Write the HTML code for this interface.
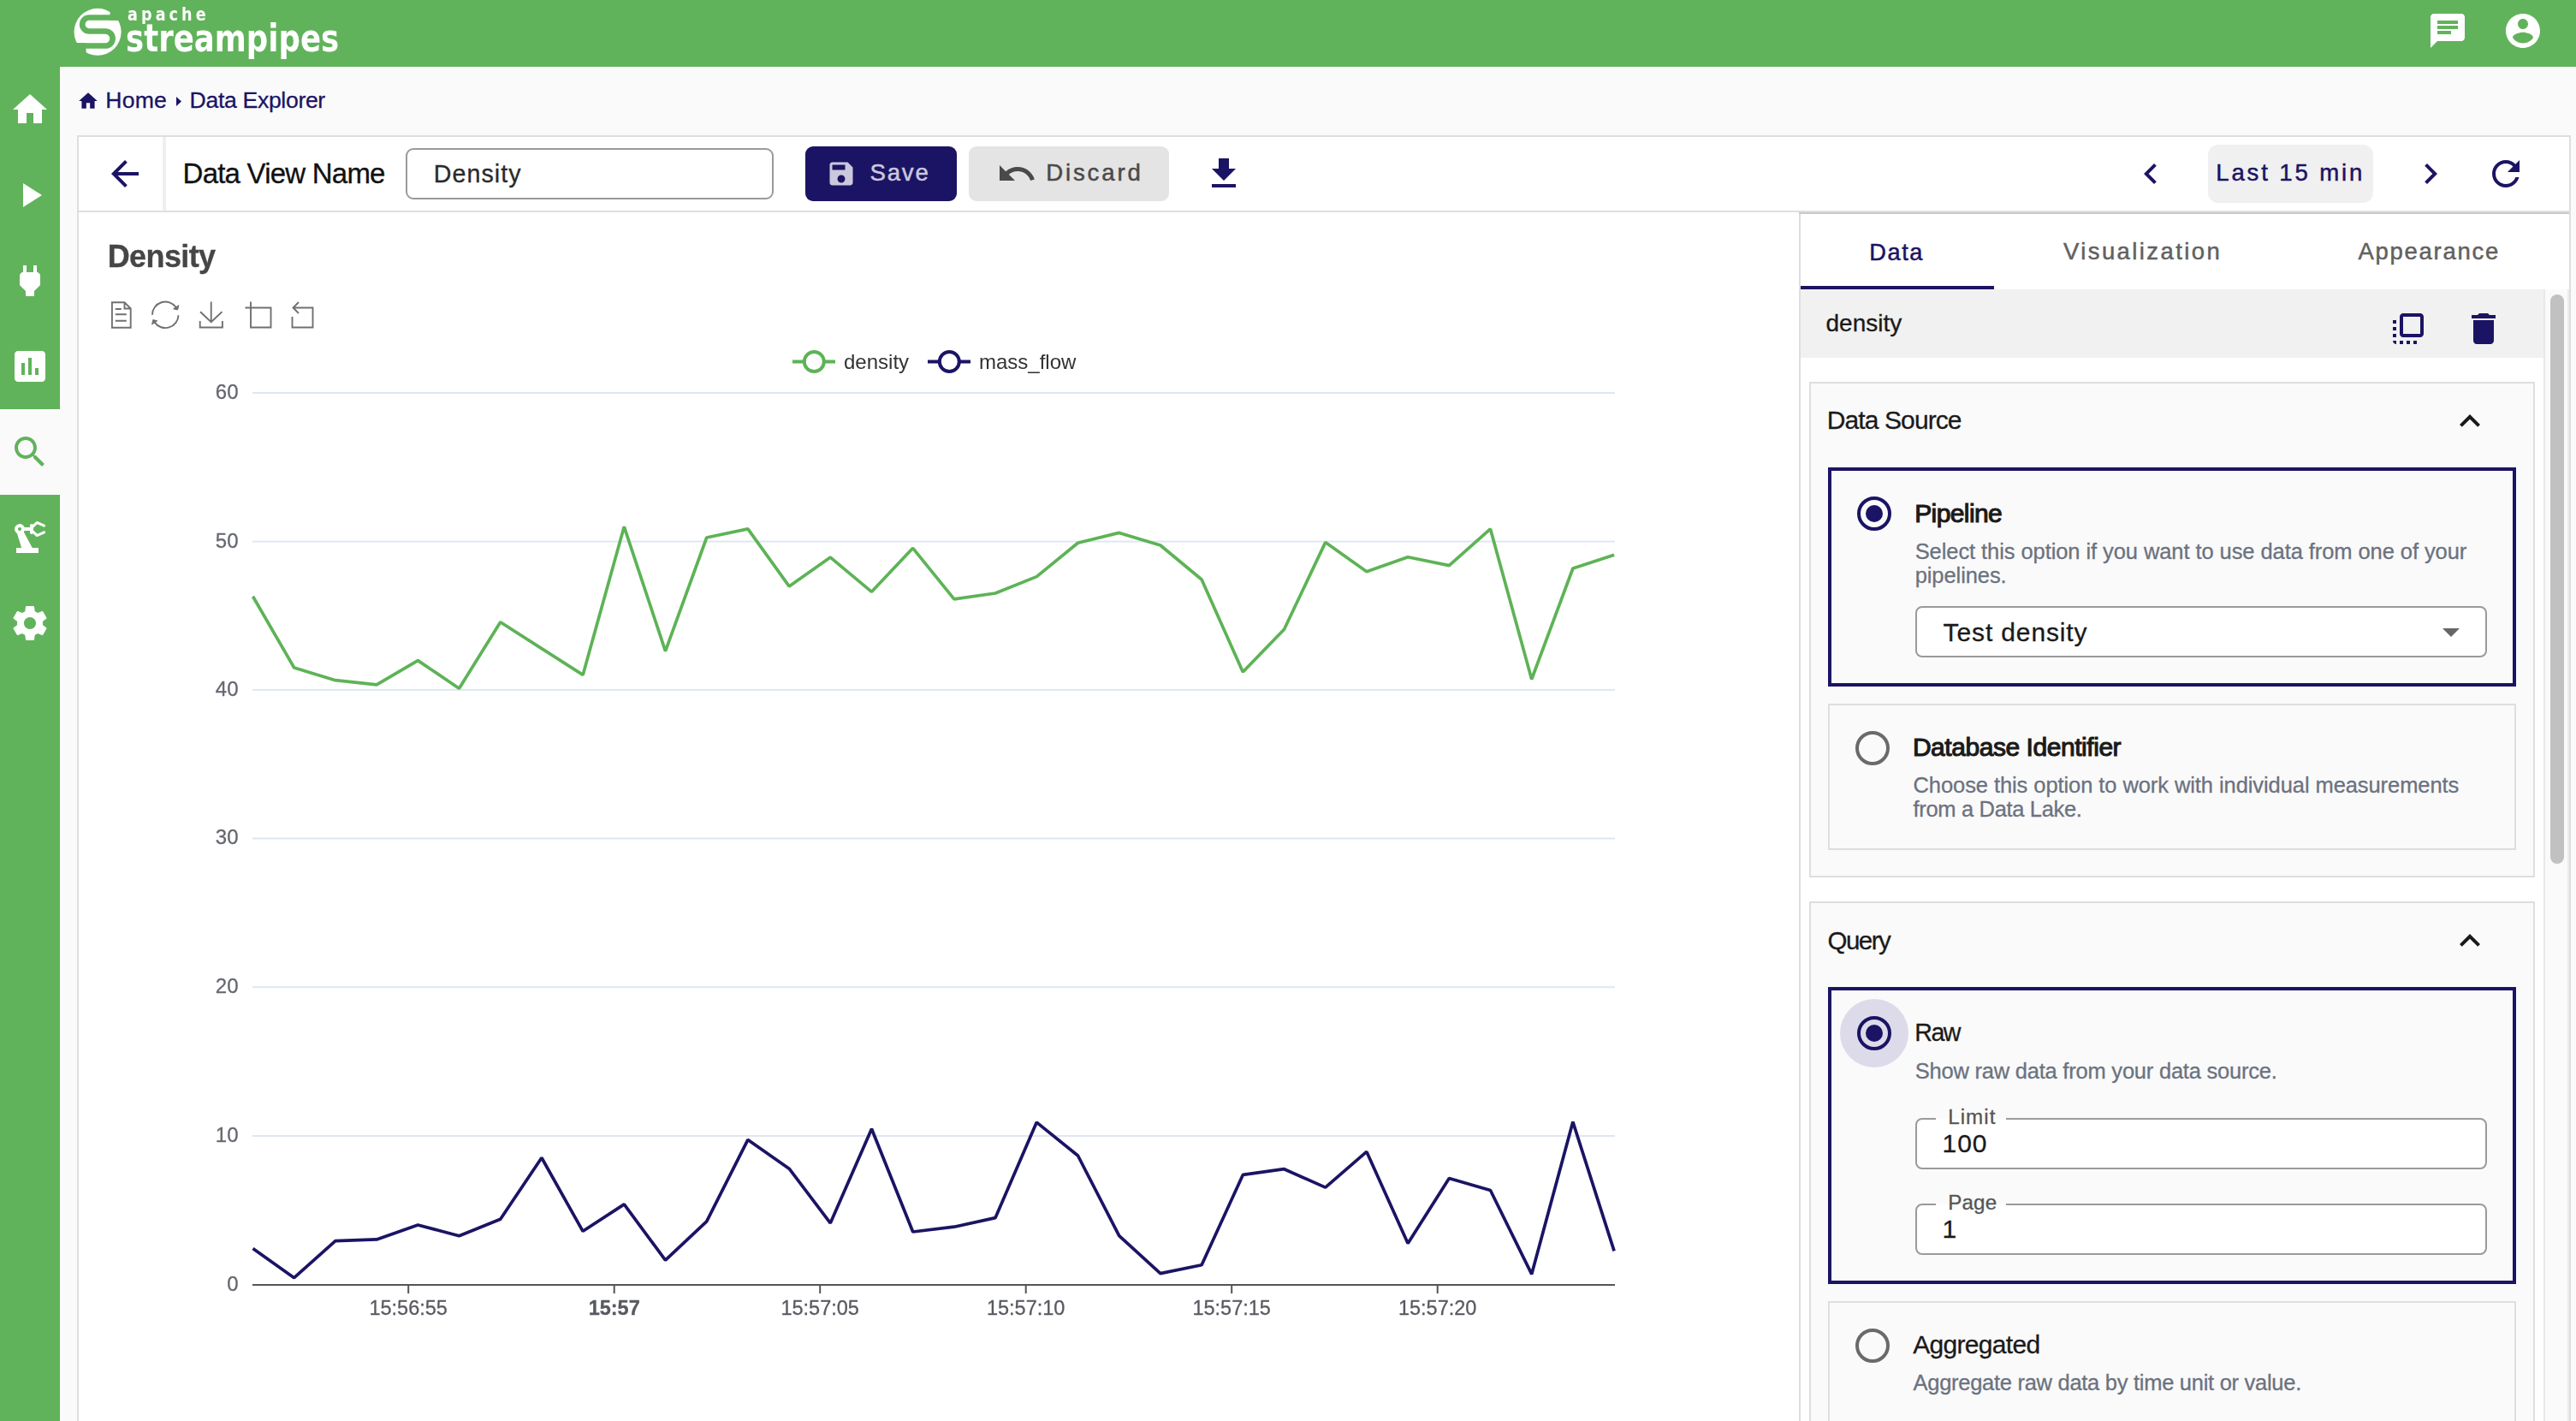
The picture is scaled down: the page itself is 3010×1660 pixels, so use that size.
<!DOCTYPE html>
<html lang="en"><head><meta charset="utf-8"><title>Apache StreamPipes - Data Explorer</title>
<style>
*{box-sizing:border-box;margin:0;padding:0}
html,body{width:3010px;height:1660px;overflow:hidden;background:#fafafa;font-family:"Liberation Sans",Arial,sans-serif}
body{position:relative}
.a{position:absolute;display:block}
.t{white-space:nowrap;line-height:1;-webkit-text-stroke:0.3px currentColor}
svg text{font-family:"Liberation Sans",Arial,sans-serif}
</style></head><body>
<div class="a" style="left:90px;top:158px;width:2914px;height:1520px;background:#fff;border:2px solid #dedede"></div>
<div class="a" style="left:0px;top:0px;width:3010px;height:78px;background:#61B35B"></div>
<div class="a" style="left:0px;top:78px;width:70px;height:1582px;background:#61B35B"></div>
<div class="a" style="left:0px;top:477.5px;width:70px;height:100.8px;background:#fafafa"></div>
<svg class="a" style="left:80px;top:0px" width="80" height="78" viewBox="80 0 80 78">
<circle cx="114.1" cy="37.3" r="27.5" fill="#fff"/>
<rect x="128.6" y="0" width="30" height="23.8" fill="#61B35B"/>
<rect x="80" y="50.2" width="20.6" height="28" fill="#61B35B"/>
<path d="M145 20.5 H104.2 A8 8 0 0 0 104.2 36.5 H123.1 A8.5 8.5 0 0 1 123.1 53.5 H84" fill="none" stroke="#61B35B" stroke-width="6.7"/>
</svg>
<span class="a t " style="left:149.20px;top:5.58px;font-size:22px;color:#fff;font-weight:700;letter-spacing:5.1px;font-family:'DejaVu Sans','Liberation Sans',sans-serif;transform:scaleX(0.8);transform-origin:0 0;-webkit-text-stroke:0">apache</span>
<span class="a t " style="left:147.30px;top:22.85px;font-size:44px;color:#fff;font-weight:700;letter-spacing:0px;font-family:'DejaVu Sans','Liberation Sans',sans-serif;transform:scaleX(0.808);transform-origin:0 0;-webkit-text-stroke:0">streampipes</span>
<svg class="a" style="left:2835.80px;top:11.80px" width="48" height="48" viewBox="0 0 24 24"><path fill="#fff" d="M20 2H4c-1.1 0-1.99.9-1.99 2L2 22l4-4h14c1.1 0 2-.9 2-2V4c0-1.1-.9-2-2-2zM6 9h12v2H6V9zm8 5H6v-2h8v2zm4-6H6V6h12v2z"/></svg>
<svg class="a" style="left:2923.80px;top:11.90px" width="48" height="48" viewBox="0 0 24 24"><path fill="#fff" d="M12 2C6.48 2 2 6.48 2 12s4.48 10 10 10 10-4.48 10-10S17.52 2 12 2zm0 3c1.66 0 3 1.34 3 3s-1.34 3-3 3-3-1.34-3-3 1.34-3 3-3zm0 14.2c-2.5 0-4.71-1.28-6-3.22.03-1.99 4-3.08 6-3.08 1.99 0 5.97 1.09 6 3.08-1.29 1.94-3.5 3.22-6 3.22z"/></svg>
<svg class="a" style="left:11.00px;top:103.60px" width="48" height="48" viewBox="0 0 24 24"><path fill="#fff" d="M10 20v-6h4v6h5v-8h3L12 3 2 12h3v8z"/></svg>
<svg class="a" style="left:11.00px;top:204.40px" width="48" height="48" viewBox="0 0 24 24"><path fill="#fff" d="M8 5v14l11-7z"/></svg>
<svg class="a" style="left:11.10px;top:304.10px" width="48" height="48" viewBox="0 0 24 24"><path fill="#fff" d="M16.01 7L16 3h-2v4h-4V3H8v4h-.01C7 6.99 6 7.99 6 8.99v5.49L9.5 18v3h5v-3l3.5-3.51v-5.5c0-1-1-2-1.99-1.99z"/></svg>
<svg class="a" style="left:11.00px;top:404.10px" width="48" height="48" viewBox="0 0 24 24"><path fill="#fff" d="M19 3H5c-1.1 0-2 .9-2 2v14c0 1.1.9 2 2 2h14c1.1 0 2-.9 2-2V5c0-1.1-.9-2-2-2zM9 17H7v-7h2v7zm4 0h-2V7h2v10zm4 0h-2v-4h2v4z"/></svg>
<svg class="a" style="left:11.00px;top:504.10px" width="48" height="48" viewBox="0 0 24 24"><path fill="#61B35B" d="M15.5 14h-.79l-.28-.27C15.41 12.59 16 11.11 16 9.5 16 5.91 13.09 3 9.5 3S3 5.91 3 9.5 5.91 16 9.5 16c1.61 0 3.09-.59 4.23-1.57l.27.28v.79l5 4.99L20.49 19l-4.99-5zm-6 0C7.01 14 5 11.99 5 9.5S7.01 5 9.5 5 14 7.01 14 9.5 11.99 14 9.5 14z"/></svg>
<svg class="a" style="left:11.20px;top:604.00px" width="48" height="48" viewBox="0 0 24 24"><path fill="#fff" d="M19.93 8.21l-3.6 1.68L14 7.7V6.3l2.33-2.19 3.6 1.68c.38.18.82.01 1-.36.18-.38.01-.82-.36-1L16.65 2.6c-.38-.18-.83-.1-1.13.2l-1.74 1.6C13.6 4.16 13.32 4 13 4c-.55 0-1 .45-1 1v1H8.82C8.34 4.65 6.98 3.73 5.4 4.07c-1.16.25-2.15 1.25-2.36 2.43-.22 1.32.46 2.47 1.48 3.08L7.08 18H4v3h13v-3h-3.62L8.41 8.77c.17-.24.31-.49.41-.77H12v1c0 .55.45 1 1 1 .32 0 .6-.16.78-.4l1.74 1.6c.3.3.75.38 1.13.2l3.92-1.83c.38-.18.54-.62.36-1-.18-.37-.62-.54-1-.36zM6 8c-.55 0-1-.45-1-1s.45-1 1-1 1 .45 1 1-.45 1-1 1z"/></svg>
<svg class="a" style="left:11.20px;top:704.00px" width="48" height="48" viewBox="0 0 24 24"><path fill="#fff" d="M19.43 12.98c.04-.32.07-.64.07-.98s-.03-.66-.07-.98l2.11-1.65c.19-.15.24-.42.12-.64l-2-3.46c-.12-.22-.39-.3-.61-.22l-2.49 1c-.52-.4-1.08-.73-1.69-.98l-.38-2.65C14.46 2.18 14.25 2 14 2h-4c-.25 0-.46.18-.49.42l-.38 2.65c-.61.25-1.17.59-1.69.98l-2.49-1c-.23-.09-.49 0-.61.22l-2 3.46c-.13.22-.07.49.12.64l2.11 1.65c-.04.32-.07.65-.07.98s.03.66.07.98l-2.11 1.65c-.19.15-.24.42-.12.64l2 3.46c.12.22.39.3.61.22l2.49-1c.52.4 1.08.73 1.69.98l.38 2.65c.03.24.24.42.49.42h4c.25 0 .46-.18.49-.42l.38-2.65c.61-.25 1.17-.59 1.69-.98l2.49 1c.23.09.49 0 .61-.22l2-3.46c.12-.22.07-.49-.12-.64l-2.11-1.65zM12 15.5c-1.93 0-3.5-1.57-3.5-3.5s1.57-3.5 3.5-3.5 3.5 1.57 3.5 3.5-1.57 3.5-3.5 3.5z"/></svg>
<svg class="a" style="left:90.30px;top:104.50px" width="26" height="26" viewBox="0 0 24 24"><path fill="#1B1464" d="M10 20v-6h4v6h5v-8h3L12 3 2 12h3v8z"/></svg>
<span class="a t " style="left:123.30px;top:104.18px;font-size:26.6px;color:#1B1464;font-weight:400;letter-spacing:0.2px;">Home</span>
<svg class="a" style="left:205.7px;top:112.6px" width="7" height="12" viewBox="0 0 7 12"><path d="M0 0L6 5.5 0 11z" fill="#1B1464"/></svg>
<span class="a t " style="left:221.60px;top:104.18px;font-size:26.6px;color:#1B1464;font-weight:400;letter-spacing:-0.33px;">Data Explorer</span>
<div class="a" style="left:92px;top:246px;width:2910px;height:2px;background:#e0e0e0"></div>
<div class="a" style="left:190px;top:160px;width:4px;height:86px;background:#efefef"></div>
<svg class="a" style="left:122.20px;top:179.20px" width="48" height="48" viewBox="0 0 24 24"><path fill="#1B1464" d="M20 11H7.83l5.59-5.59L12 4l-8 8 8 8 1.41-1.41L7.83 13H20v-2z"/></svg>
<span class="a t " style="left:213.60px;top:185.77px;font-size:33px;color:#111;font-weight:400;letter-spacing:-0.78px;">Data View Name</span>
<div class="a" style="left:474px;top:173px;width:430px;height:60.3px;background:#fff;border:2px solid #9a9a9a;border-radius:9px"></div>
<span class="a t " style="left:506.70px;top:188.59px;font-size:28.6px;color:#2a2a2a;font-weight:400;letter-spacing:1.1px;">Density</span>
<div class="a" style="left:941px;top:171px;width:176.7px;height:63.7px;background:#1B1464;border-radius:9px"></div>
<svg class="a" style="left:964.80px;top:185.10px" width="36" height="36" viewBox="0 0 24 24"><path fill="#cbc8de" d="M17 3H5c-1.11 0-2 .9-2 2v14c0 1.1.89 2 2 2h14c1.1 0 2-.9 2-2V7l-4-4zm-5 16c-1.66 0-3-1.34-3-3s1.34-3 3-3 3 1.34 3 3-1.34 3-3 3zm3-10H5V5h10v4z"/></svg>
<span class="a t " style="left:1016.40px;top:188.34px;font-size:27.6px;color:#cbc8de;font-weight:400;letter-spacing:1.85px;-webkit-text-stroke:0.5px #cbc8de">Save</span>
<div class="a" style="left:1132px;top:171px;width:234px;height:63.7px;background:#e4e4e4;border-radius:9px"></div>
<svg class="a" style="left:1163.50px;top:178.80px" width="48" height="48" viewBox="0 0 24 24"><path fill="#4a4a4a" d="M12.5 8c-2.65 0-5.05.99-6.9 2.6L2 7v9h9l-3.62-3.62c1.39-1.16 3.16-1.88 5.12-1.88 3.54 0 6.55 2.31 7.6 5.5l2.37-.78C21.08 11.03 17.15 8 12.5 8z"/></svg>
<span class="a t " style="left:1222.20px;top:188.34px;font-size:27.6px;color:#4a4a4a;font-weight:400;letter-spacing:2.85px;-webkit-text-stroke:0.5px #4a4a4a">Discard</span>
<svg class="a" style="left:1405.70px;top:179.30px" width="48" height="48" viewBox="0 0 24 24"><path fill="#1B1464" d="M19 9h-4V3H9v6H5l7 7 7-7zM5 18v2h14v-2H5z"/></svg>
<svg class="a" style="left:2488.60px;top:179.40px" width="48" height="48" viewBox="0 0 24 24"><path fill="#1B1464" d="M15.41 7.41L14 6l-6 6 6 6 1.41-1.41L10.83 12z"/></svg>
<div class="a" style="left:2580px;top:169px;width:192.7px;height:67.8px;background:#f0f0f0;border-radius:12px"></div>
<span class="a t " style="left:2589.20px;top:188.34px;font-size:27.6px;color:#1B1464;font-weight:400;letter-spacing:2.85px;-webkit-text-stroke:0.5px #1B1464">Last 15 min</span>
<svg class="a" style="left:2815.50px;top:179.40px" width="48" height="48" viewBox="0 0 24 24"><path fill="#1B1464" d="M10 6L8.59 7.41 13.17 12l-4.58 4.59L10 18l6-6z"/></svg>
<svg class="a" style="left:2903.80px;top:178.90px" width="48" height="48" viewBox="0 0 24 24"><path fill="#1B1464" d="M17.65 6.35C16.2 4.9 14.21 4 12 4c-4.42 0-7.99 3.58-7.99 8s3.57 8 7.99 8c3.73 0 6.84-2.55 7.73-6h-2.08c-.82 2.33-3.04 4-5.65 4-3.31 0-6-2.69-6-6s2.69-6 6-6c1.66 0 3.14.69 4.22 1.78L13 11h7V4l-2.35 2.35z"/></svg>
<span class="a t " style="left:125.70px;top:282.33px;font-size:36px;color:#464646;font-weight:700;letter-spacing:-0.6px;filter:blur(0.5px)">Density</span>
<svg class="a" style="left:92px;top:250px;filter:blur(0.6px)" width="2010" height="1410" viewBox="92 250 2010 1410">
<rect x="295" y="458.0" width="1592" height="2" fill="#E0E6F1"/>
<rect x="295" y="631.6" width="1592" height="2" fill="#E0E6F1"/>
<rect x="295" y="804.9" width="1592" height="2" fill="#E0E6F1"/>
<rect x="295" y="978.5" width="1592" height="2" fill="#E0E6F1"/>
<rect x="295" y="1152.2" width="1592" height="2" fill="#E0E6F1"/>
<rect x="295" y="1326.0" width="1592" height="2" fill="#E0E6F1"/>
<rect x="295" y="1500" width="1592" height="2" fill="#555"/>
<rect x="476.2" y="1501" width="2" height="10" fill="#555"/>
<rect x="716.7" y="1501" width="2" height="10" fill="#555"/>
<rect x="957.2" y="1501" width="2" height="10" fill="#555"/>
<rect x="1197.7" y="1501" width="2" height="10" fill="#555"/>
<rect x="1438.2" y="1501" width="2" height="10" fill="#555"/>
<rect x="1678.7" y="1501" width="2" height="10" fill="#555"/>
<polyline points="295.5,696.7 343.7,780.0 391.9,794.7 440.1,799.8 488.3,771.6 536.5,804.2 584.7,726.8 632.9,757.6 681.1,788.4 729.3,615.3 777.5,760.6 825.7,628.0 873.9,617.9 922.1,684.9 970.3,651.1 1018.5,691.3 1066.7,640.3 1114.9,699.8 1163.1,693.0 1211.3,673.6 1259.5,634.2 1307.7,622.4 1355.9,637.0 1404.1,677.0 1452.3,785.0 1500.5,735.2 1548.7,633.6 1596.9,667.7 1645.1,650.8 1693.3,660.6 1741.5,617.9 1789.7,793.5 1837.9,664.0 1886.1,648.3" fill="none" stroke="#5DB356" stroke-width="3.7" stroke-linejoin="bevel"/>
<polyline points="295.5,1458.6 343.7,1492.7 391.9,1449.6 440.1,1447.9 488.3,1431.0 536.5,1443.7 584.7,1424.3 632.9,1352.5 681.1,1438.3 729.3,1406.9 777.5,1472.1 825.7,1426.8 873.9,1331.4 922.1,1365.2 970.3,1428.8 1018.5,1318.7 1066.7,1439.0 1114.9,1433.2 1163.1,1422.6 1211.3,1311.1 1259.5,1350.0 1307.7,1443.7 1355.9,1487.6 1404.1,1477.8 1452.3,1372.4 1500.5,1365.7 1548.7,1387.1 1596.9,1345.4 1645.1,1452.5 1693.3,1376.5 1741.5,1390.5 1789.7,1488.4 1837.9,1310.6 1886.1,1461.4" fill="none" stroke="#1B1464" stroke-width="3.7" stroke-linejoin="bevel"/>
<text x="278.5" y="465.7" text-anchor="end" font-size="24" fill="#666870" stroke="#666870" stroke-width="0.3">60</text>
<text x="278.5" y="639.5" text-anchor="end" font-size="24" fill="#666870" stroke="#666870" stroke-width="0.3">50</text>
<text x="278.5" y="812.8" text-anchor="end" font-size="24" fill="#666870" stroke="#666870" stroke-width="0.3">40</text>
<text x="278.5" y="986.4" text-anchor="end" font-size="24" fill="#666870" stroke="#666870" stroke-width="0.3">30</text>
<text x="278.5" y="1160.2" text-anchor="end" font-size="24" fill="#666870" stroke="#666870" stroke-width="0.3">20</text>
<text x="278.5" y="1334.0" text-anchor="end" font-size="24" fill="#666870" stroke="#666870" stroke-width="0.3">10</text>
<text x="278.5" y="1508.2" text-anchor="end" font-size="24" fill="#666870" stroke="#666870" stroke-width="0.3">0</text>
<text x="477.2" y="1535.8" text-anchor="middle" font-size="23.5" fill="#585a61" stroke="#585a61" stroke-width="0.3">15:56:55</text>
<text x="717.7" y="1535.8" text-anchor="middle" font-size="23.5" fill="#585a61" stroke="#585a61" stroke-width="0.3" font-weight="700">15:57</text>
<text x="958.2" y="1535.8" text-anchor="middle" font-size="23.5" fill="#585a61" stroke="#585a61" stroke-width="0.3">15:57:05</text>
<text x="1198.7" y="1535.8" text-anchor="middle" font-size="23.5" fill="#585a61" stroke="#585a61" stroke-width="0.3">15:57:10</text>
<text x="1439.2" y="1535.8" text-anchor="middle" font-size="23.5" fill="#585a61" stroke="#585a61" stroke-width="0.3">15:57:15</text>
<text x="1679.7" y="1535.8" text-anchor="middle" font-size="23.5" fill="#585a61" stroke="#585a61" stroke-width="0.3">15:57:20</text>
<rect x="926" y="420.5" width="50" height="4" fill="#5DB356"/><circle cx="951.3" cy="422.5" r="11.5" fill="#fff" stroke="#5DB356" stroke-width="4"/>
<text x="986" y="430.5" font-size="24" fill="#333">density</text>
<rect x="1084" y="420.5" width="50" height="4" fill="#1B1464"/><circle cx="1109.3" cy="422.5" r="11.5" fill="#fff" stroke="#1B1464" stroke-width="4"/>
<text x="1144" y="430.5" font-size="24" fill="#333">mass_flow</text>
<g fill="none" stroke="#707070" stroke-width="1.9">
<path d="M130.9 353.3h14.6l7.2 7.2v22.3h-21.8z M145.5 353.3v7.2h7.2 M134.8 361h7 M134.8 367.3h13 M134.8 374.8h13"/>
<path d="M177.9 367.8A15.3 15.3 0 0 1 205.7 359 M208.5 368.3A15.3 15.3 0 0 1 180.7 376.6"/>
<path d="M207.6 362l1.2-5.4-6.2 4.2z M178.8 373.6l-1.2 5.4 6.2-4.2z" fill="#707070" stroke-width="1"/>
<path d="M246.7 352.5v24 M234 364.3l12.7 12 12.7-12 M233.7 375v7.5h26.2v-7.5"/>
<path d="M286.5 359.5h30v23h-23.5v-30"/>
<path d="M341.5 370v12.5h24v-23h-22 M349 353l-6.5 6.5 6.5 6.5"/>
</g>
</svg>
<div class="a" style="left:2102px;top:248px;width:2px;height:1412px;background:#dedede"></div>
<div class="a" style="left:2102px;top:248px;width:900px;height:2px;background:#c9c9c9"></div>
<span class="a t " style="left:2184.20px;top:280.58px;font-size:27.2px;color:#1B1464;font-weight:400;letter-spacing:1.6px;-webkit-text-stroke:0.5px #1B1464">Data</span>
<span class="a t " style="left:2411.00px;top:280.32px;font-size:27.5px;color:#616161;font-weight:400;letter-spacing:2.4px;-webkit-text-stroke:0.5px #616161">Visualization</span>
<span class="a t " style="left:2755.50px;top:280.32px;font-size:27.5px;color:#616161;font-weight:400;letter-spacing:1.72px;-webkit-text-stroke:0.5px #616161">Appearance</span>
<div class="a" style="left:2104px;top:334px;width:226px;height:4px;background:#1B1464"></div>
<div class="a" style="left:2104px;top:338px;width:868px;height:80px;background:#f1f1f1"></div>
<div class="a" style="left:2972px;top:338px;width:30px;height:1322px;background:#fafafa;border-left:2px solid #e8e8e8;border-right:2px solid #ececec"></div>
<div class="a" style="left:2980px;top:344px;width:16px;height:665px;background:#c1c1c1;border-radius:8px"></div>
<span class="a t " style="left:2133.50px;top:364.10px;font-size:28px;color:#1a1a1a;font-weight:400;letter-spacing:0px;">density</span>
<svg class="a" style="left:2789.50px;top:359.80px" width="48" height="48" viewBox="0 0 24 24"><path fill="#1B1464" d="M3 13h2v-2H3v2zm0 4h2v-2H3v2zm2 4v-2H3c0 1.1.89 2 2 2zM3 9h2V7H3v2zm12 12h2v-2h-2v2zm4-18H9c-1.11 0-2 .9-2 2v10c0 1.1.89 2 2 2h10c1.1 0 2-.9 2-2V5c0-1.1-.9-2-2-2zm0 12H9V5h10v10zm-8 6h2v-2h-2v2zm-4 0h2v-2H7v2z"/></svg>
<svg class="a" style="left:2877.90px;top:359.80px" width="48" height="48" viewBox="0 0 24 24"><path fill="#1B1464" d="M6 19c0 1.1.9 2 2 2h8c1.1 0 2-.9 2-2V7H6v12zM19 4h-3.5l-1-1h-5l-1 1H5v2h14V4z"/></svg>
<div class="a" style="left:2114px;top:446px;width:848px;height:579px;background:#fafafa;border:2px solid #dedede"></div>
<span class="a t " style="left:2134.80px;top:475.81px;font-size:30px;color:#1a1a1a;font-weight:400;letter-spacing:-0.9px;">Data Source</span>
<svg class="a" style="left:2862.40px;top:467.90px" width="48" height="48" viewBox="0 0 24 24"><path fill="#1a1a1a" d="M12 8l-6 6 1.41 1.41L12 10.83l4.59 4.58L18 14z"/></svg>
<div class="a" style="left:2135.7px;top:546px;width:804.3px;height:256.2px;border:4px solid #1B1464"></div>
<svg class="a" style="left:2167.8px;top:577.5px" width="44" height="44" viewBox="-22 -22 44 44"><circle r="18" fill="none" stroke="#1B1464" stroke-width="4"/><circle r="10" fill="#1B1464"/></svg>
<span class="a t " style="left:2237.20px;top:584.81px;font-size:30px;color:#1a1a1a;font-weight:400;letter-spacing:-0.6px;-webkit-text-stroke:1.1px #1a1a1a">Pipeline</span>
<span class="a t " style="left:2237.70px;top:632.01px;font-size:25.5px;color:#6b7280;font-weight:400;letter-spacing:-0.08px;">Select this option if you want to use data from one of your</span>
<span class="a t " style="left:2237.70px;top:660.41px;font-size:25.5px;color:#6b7280;font-weight:400;letter-spacing:-0.08px;">pipelines.</span>
<div class="a" style="left:2237.6px;top:707.8px;width:668.6px;height:60.4px;background:#fff;border:2px solid #9a9a9a;border-radius:8px"></div>
<span class="a t " style="left:2270.60px;top:723.50px;font-size:30px;color:#1a1a1a;font-weight:400;letter-spacing:0.87px;">Test density</span>
<svg class="a" style="left:2840.00px;top:713.50px" width="48" height="48" viewBox="0 0 24 24"><path fill="#666" d="M7 10l5 5 5-5z"/></svg>
<div class="a" style="left:2135.7px;top:821.6px;width:804.3px;height:171.3px;border:2px solid #dedede"></div>
<svg class="a" style="left:2166.0px;top:852.0px" width="44" height="44" viewBox="-22 -22 44 44"><circle r="18" fill="none" stroke="#6a6a6a" stroke-width="4"/></svg>
<span class="a t " style="left:2234.90px;top:857.90px;font-size:30px;color:#1a1a1a;font-weight:400;letter-spacing:-0.45px;-webkit-text-stroke:1.1px #1a1a1a">Database Identifier</span>
<span class="a t " style="left:2235.50px;top:905.11px;font-size:25.5px;color:#6b7280;font-weight:400;letter-spacing:-0.08px;">Choose this option to work with individual measurements</span>
<span class="a t " style="left:2235.50px;top:932.81px;font-size:25.5px;color:#6b7280;font-weight:400;letter-spacing:-0.33px;">from a Data Lake.</span>
<div class="a" style="left:2114px;top:1053px;width:848px;height:700px;background:#fafafa;border:2px solid #dedede"></div>
<span class="a t " style="left:2135.50px;top:1083.93px;font-size:29.5px;color:#1a1a1a;font-weight:400;letter-spacing:-1.5px;">Query</span>
<svg class="a" style="left:2862.40px;top:1075.00px" width="48" height="48" viewBox="0 0 24 24"><path fill="#1a1a1a" d="M12 8l-6 6 1.41 1.41L12 10.83l4.59 4.58L18 14z"/></svg>
<div class="a" style="left:2135.7px;top:1153.3px;width:804.3px;height:347px;border:4px solid #1B1464"></div>
<div class="a" style="left:2149.8px;top:1167px;width:80px;height:80px;background:#dddbe9;border-radius:50%"></div>
<svg class="a" style="left:2167.8px;top:1185.0px" width="44" height="44" viewBox="-22 -22 44 44"><circle r="18" fill="none" stroke="#1B1464" stroke-width="4"/><circle r="10" fill="#1B1464"/></svg>
<span class="a t " style="left:2237.30px;top:1191.99px;font-size:28.6px;color:#1a1a1a;font-weight:400;letter-spacing:-1.5px;">Raw</span>
<span class="a t " style="left:2237.70px;top:1238.51px;font-size:25.5px;color:#6b7280;font-weight:400;letter-spacing:-0.22px;">Show raw data from your data source.</span>
<div class="a" style="left:2237.6px;top:1306px;width:668.6px;height:60.4px;background:#fff;border:2px solid #9a9a9a;border-radius:8px"></div>
<div class="a" style="left:2262px;top:1306px;width:81.5px;height:2px;background:#fcfcfc"></div>
<span class="a t " style="left:2276.30px;top:1293.31px;font-size:24.2px;color:#555;font-weight:400;letter-spacing:1px;">Limit</span>
<span class="a t " style="left:2269.50px;top:1321.11px;font-size:30px;color:#1a1a1a;font-weight:400;letter-spacing:1px;">100</span>
<div class="a" style="left:2237.6px;top:1406px;width:668.6px;height:60.4px;background:#fff;border:2px solid #9a9a9a;border-radius:8px"></div>
<div class="a" style="left:2262px;top:1406px;width:81.5px;height:2px;background:#fcfcfc"></div>
<span class="a t " style="left:2276.30px;top:1393.31px;font-size:24.2px;color:#555;font-weight:400;letter-spacing:0.1px;">Page</span>
<span class="a t " style="left:2269.50px;top:1421.11px;font-size:30px;color:#1a1a1a;font-weight:400;letter-spacing:1px;">1</span>
<div class="a" style="left:2135.7px;top:1519.9px;width:804.3px;height:300px;border:2px solid #dedede"></div>
<svg class="a" style="left:2166.0px;top:1549.8px" width="44" height="44" viewBox="-22 -22 44 44"><circle r="18" fill="none" stroke="#6a6a6a" stroke-width="4"/></svg>
<span class="a t " style="left:2235.30px;top:1555.70px;font-size:30px;color:#1a1a1a;font-weight:400;letter-spacing:-0.7px;">Aggregated</span>
<span class="a t " style="left:2235.50px;top:1603.11px;font-size:25.5px;color:#6b7280;font-weight:400;letter-spacing:-0.28px;">Aggregate raw data by time unit or value.</span>
</body></html>
